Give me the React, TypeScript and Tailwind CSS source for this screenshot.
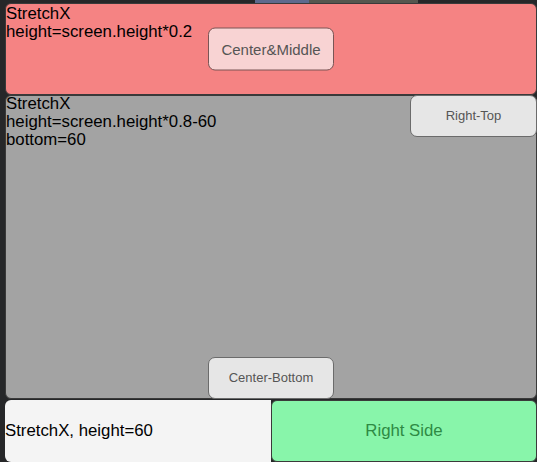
export default function App() {
  const btn =
    'flex items-center justify-center rounded-[7px] border border-[#6b6b6b] text-[13px] text-[#555]'
  return (
    <div
      className="flex h-[462px] w-[537px] flex-col overflow-hidden bg-[#262729] pl-[5px]"
      style={{ fontFamily: '"Liberation Sans", Arial, sans-serif' }}
    >
      <div className="flex h-[3px] shrink-0">
        <div className="w-[250px]" />
        <div className="w-[54px] bg-[#5d6a8e]" />
        <div className="w-[109px] bg-[#54574f]" />
      </div>

      <div className="relative h-[92px] shrink-0 rounded-[6px] border border-[#3a3a3a] bg-[#f58383] text-[16.8px] leading-[18px] text-black">
        <div className="pt-[1px]">
          StretchX
          <br />
          height=screen.height*0.2
        </div>
        <div
          className={`${btn} absolute left-1/2 top-1/2 h-[43px] w-[126px] -translate-x-1/2 -translate-y-1/2 border-[#7a5555] bg-[#f8d3d3] text-[15px] text-[#6a5a5a]`}
        >
          Center&amp;Middle
        </div>
      </div>

      <div className="relative h-[304px] shrink-0 rounded-[6px] border border-[#3a3a3a] bg-[#a3a3a3] text-[16.8px] leading-[18px] text-black">
        <div className="-mt-[1px]">
          StretchX
          <br />
          height=screen.height*0.8-60
          <br />
          bottom=60
        </div>
        <div className={`${btn} absolute right-[-1px] top-[-1px] h-[42px] w-[127px] bg-[#e6e6e6]`}>
          Right-Top
        </div>
        <div
          className={`${btn} absolute bottom-[-1px] left-1/2 h-[42px] w-[126px] -translate-x-1/2 bg-[#e6e6e6]`}
        >
          Center-Bottom
        </div>
      </div>

      <div className="mt-[1px] flex h-[62px] shrink-0">
        <div className="flex w-[266px] items-center rounded-l-[6px] bg-[#f4f4f4] text-[16.8px] text-black">
          StretchX, height=60
        </div>
        <div className="flex flex-1 items-center justify-center rounded-[6px] border border-[#3a3a3a] bg-[#88f5aa] text-[16.8px] text-[#2e8a44]">
          Right Side
        </div>
      </div>
    </div>
  )
}
